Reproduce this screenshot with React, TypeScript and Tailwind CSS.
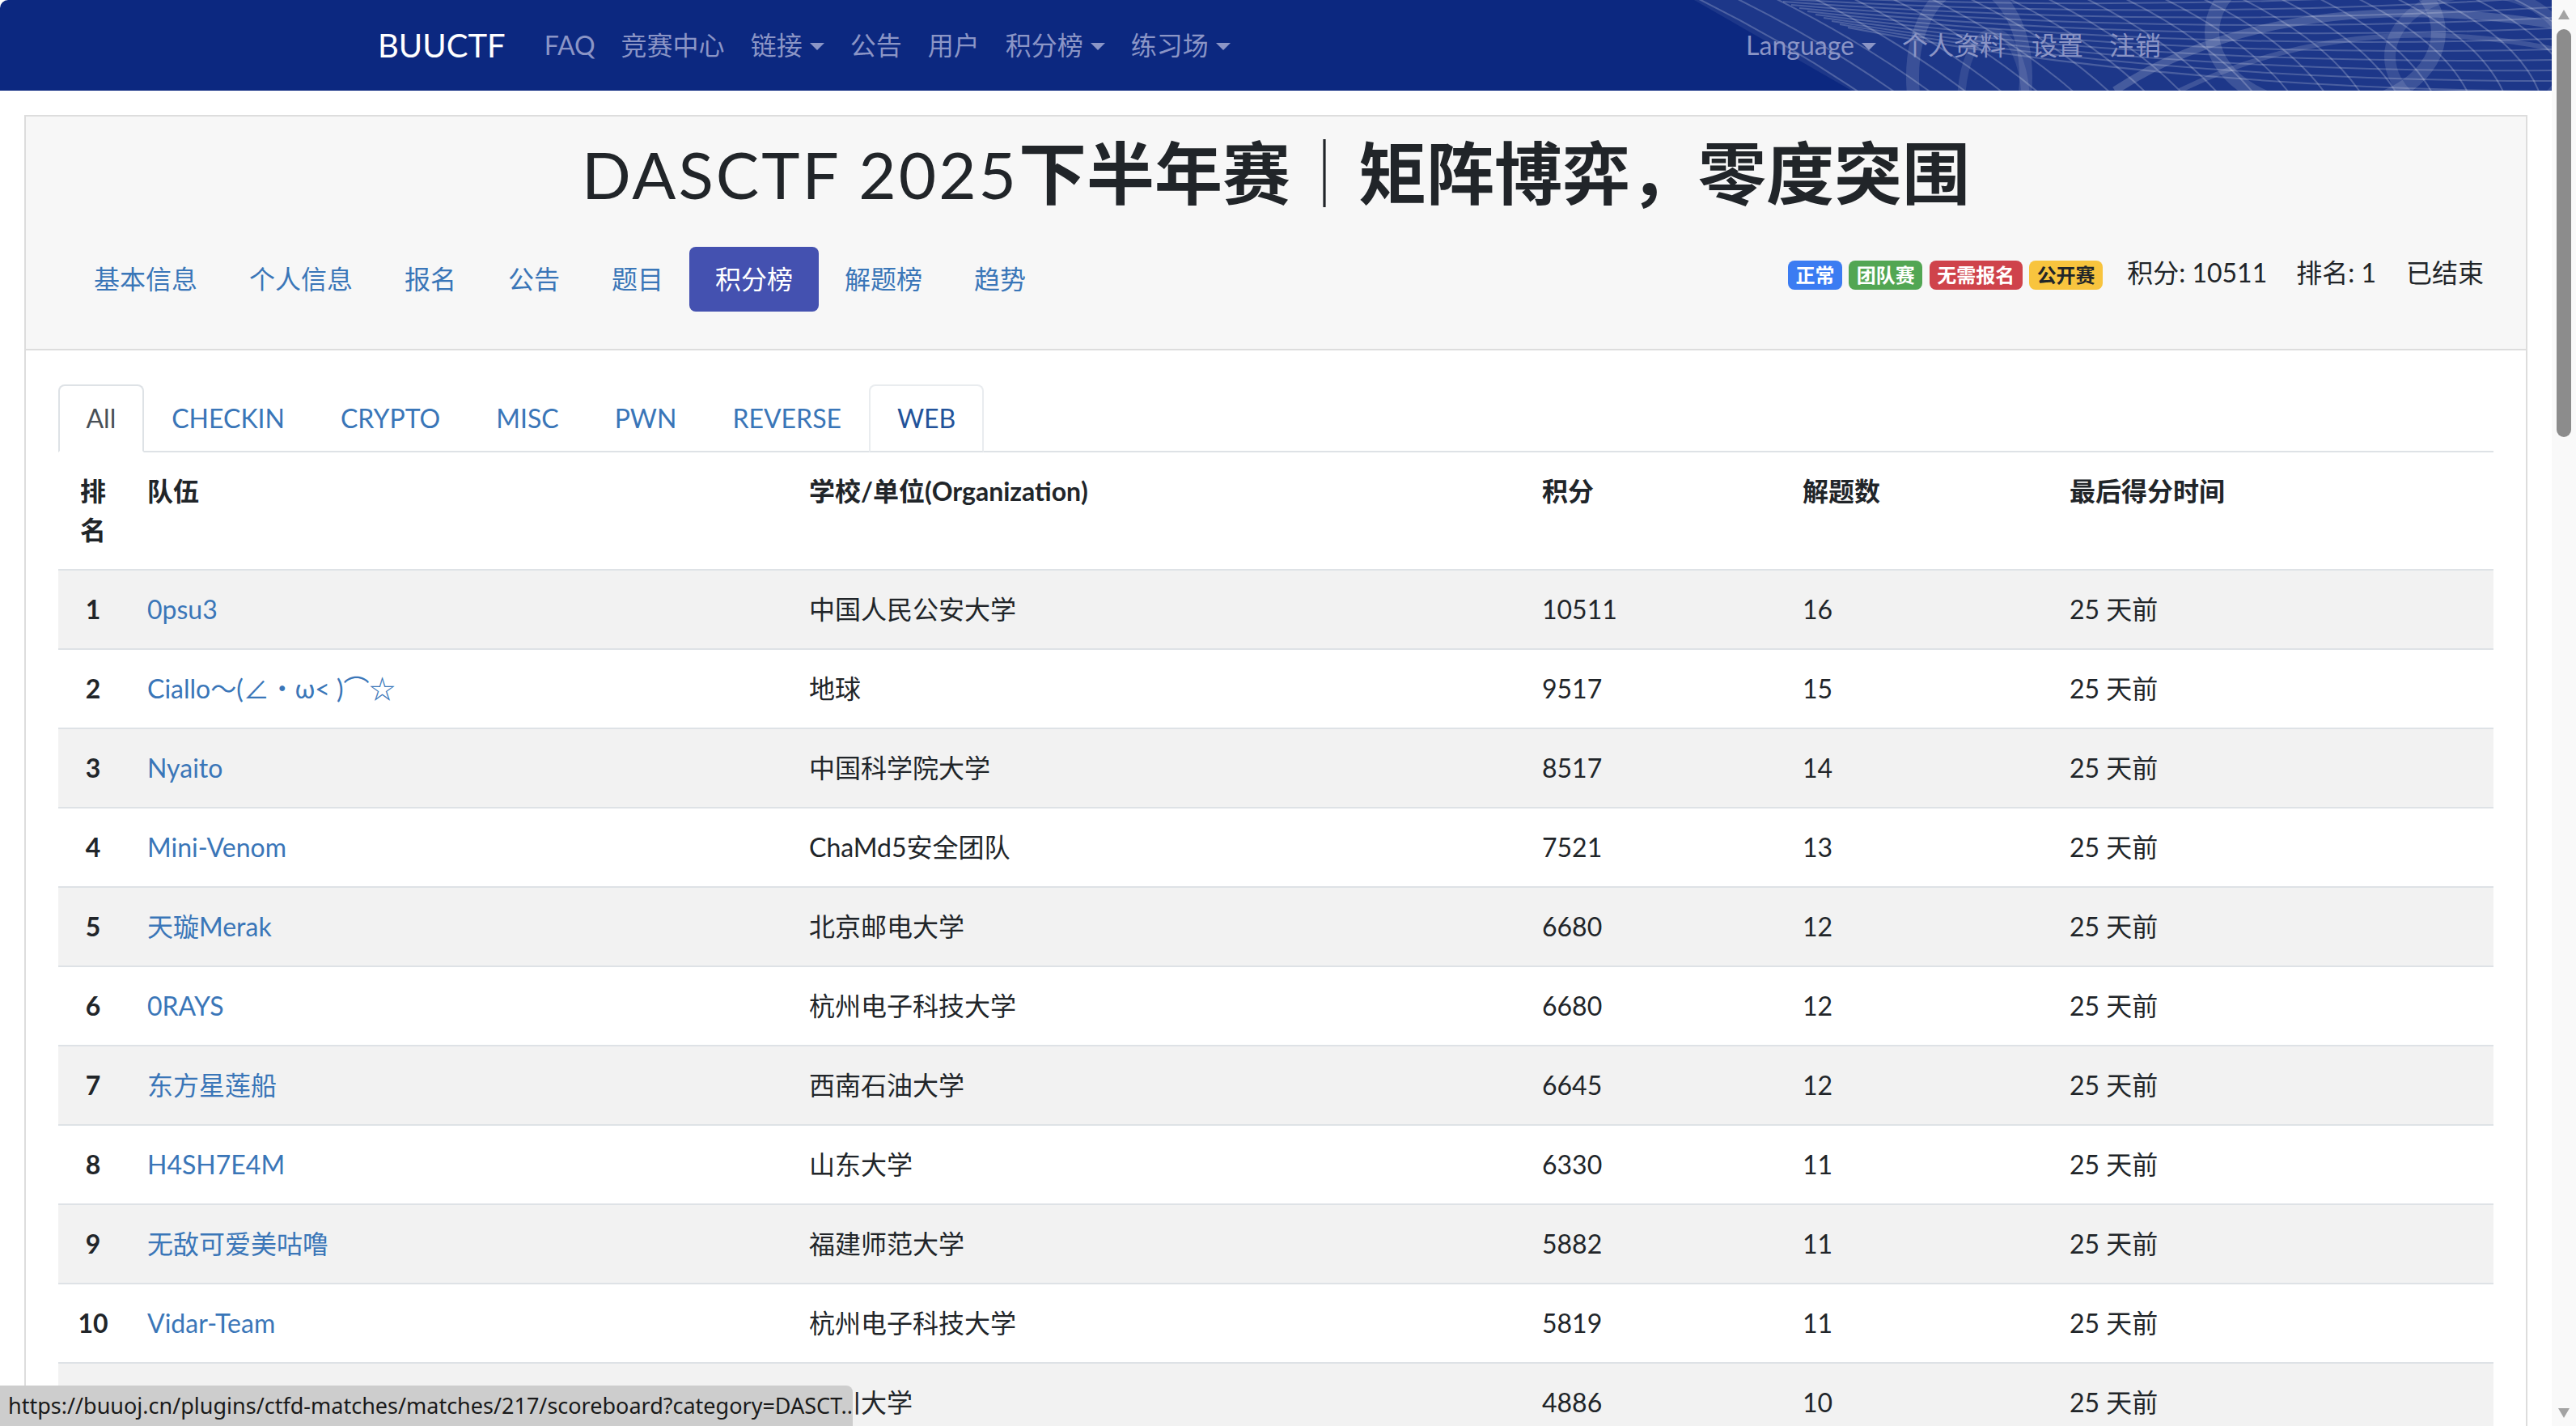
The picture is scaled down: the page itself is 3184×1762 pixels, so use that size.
import React from "react";

const LINK = "text-[#3a76b8]";

function Caret() {
  return (
    <span className="ml-[9px] inline-block h-0 w-0 border-x-[9px] border-t-[9px] border-x-transparent border-t-current align-[6px]" />
  );
}

function NavLink({ children, caret }: { children: React.ReactNode; caret?: boolean }) {
  return (
    <span className="whitespace-nowrap px-[16px] py-[16px] leading-[48px] text-[#8b95c6]">
      {children}
      {caret ? <Caret /> : null}
    </span>
  );
}

function NavBg() {
  const famA = Array.from({ length: 22 }, (_, i) => i);
  const famB = Array.from({ length: 12 }, (_, i) => i);
  return (
    <svg className="absolute right-0 top-0" width="1100" height="112" viewBox="0 0 1100 112" fill="none">
      <path d="M40 0 L1100 0 L1100 112 L235 112 Z" fill="#ffffff" fillOpacity="0.07" />
      {famA.map((i) => (
        <path
          key={"a" + i}
          d={`M${40 + i * 48} -4 Q ${150 + i * 48} 50 ${250 + i * 44} 118`}
          stroke="#ffffff"
          strokeOpacity="0.22"
          strokeWidth="2"
        />
      ))}
      {famB.map((j) => (
        <path
          key={"b" + j}
          d={`M${120 + j * 10} ${-10 + j * 4} Q 620 ${10 + j * 9} 1100 ${-30 + j * 13}`}
          stroke="#ffffff"
          strokeOpacity="0.2"
          strokeWidth="2"
        />
      ))}
      <ellipse cx="380" cy="95" rx="70" ry="115" stroke="#ffffff" strokeOpacity="0.13" strokeWidth="16" />
      <ellipse cx="410" cy="130" rx="40" ry="90" stroke="#ffffff" strokeOpacity="0.1" strokeWidth="10" />
      <ellipse cx="820" cy="40" rx="140" ry="95" stroke="#ffffff" strokeOpacity="0.14" strokeWidth="18" />
      <ellipse cx="1010" cy="70" rx="110" ry="80" stroke="#ffffff" strokeOpacity="0.12" strokeWidth="14" />
      <path d="M560 112 Q 760 -20 1100 30" stroke="#ffffff" strokeOpacity="0.18" strokeWidth="10" />
      <path d="M640 112 Q 850 10 1100 60" stroke="#ffffff" strokeOpacity="0.15" strokeWidth="6" />
    </svg>
  );
}

function Navbar() {
  return (
    <nav className="relative h-[112px] shrink-0 overflow-hidden rounded-tl-[10px] bg-[#0c2880]">
      <NavBg />
      <div className="relative mx-auto flex h-full max-w-[2280px] items-center px-[30px]">
        <span className="mr-[32px] whitespace-nowrap text-[40px] leading-[60px] text-white">BUUCTF</span>
        <NavLink>FAQ</NavLink>
        <NavLink>竞赛中心</NavLink>
        <NavLink caret>链接</NavLink>
        <NavLink>公告</NavLink>
        <NavLink>用户</NavLink>
        <NavLink caret>积分榜</NavLink>
        <NavLink caret>练习场</NavLink>
        <div className="ml-auto flex items-center">
          <NavLink caret>Language</NavLink>
          <NavLink>个人资料</NavLink>
          <NavLink>设置</NavLink>
          <NavLink>注销</NavLink>
        </div>
      </div>
    </nav>
  );
}

function Pill({ children, active }: { children: React.ReactNode; active?: boolean }) {
  return (
    <span
      className={
        "whitespace-nowrap rounded-[8px] px-[32px] py-[16px] leading-[48px] " +
        (active ? "bg-[#4451b0] text-white" : LINK)
      }
    >
      {children}
    </span>
  );
}

function Badge({ children, color }: { children: React.ReactNode; color: string }) {
  return (
    <span
      className={
        "inline-block rounded-[8px] px-[9.6px] py-[6px] align-baseline text-[24px] font-bold leading-none " + color
      }
    >
      {children}
    </span>
  );
}

function Tab({ children, active, hover }: { children: React.ReactNode; active?: boolean; hover?: boolean }) {
  let cls = "border-transparent " + LINK;
  if (active) cls = "border-[#dee2e6] border-b-white bg-white text-[#495057]";
  if (hover) cls = "border-[#e9ecef] border-b-[#dee2e6] text-[#23539a]";
  return (
    <span className={"-mb-[2px] whitespace-nowrap rounded-t-[8px] border-2 px-[32.5px] py-[16px] leading-[48px] " + cls}>
      {children}
    </span>
  );
}

const rows: [number, string, string, number, number][] = [
  [1, "0psu3", "中国人民公安大学", 10511, 16],
  [2, "Ciallo～(∠・ω< )⌒☆", "地球", 9517, 15],
  [3, "Nyaito", "中国科学院大学", 8517, 14],
  [4, "Mini-Venom", "ChaMd5安全团队", 7521, 13],
  [5, "天璇Merak", "北京邮电大学", 6680, 12],
  [6, "0RAYS", "杭州电子科技大学", 6680, 12],
  [7, "东方星莲船", "西南石油大学", 6645, 12],
  [8, "H4SH7E4M", "山东大学", 6330, 11],
  [9, "无敌可爱美咕噜", "福建师范大学", 5882, 11],
  [10, "Vidar-Team", "杭州电子科技大学", 5819, 11],
  [11, "L-team", "四川大学", 4886, 10],
  [12, "Xp0int", "暨南大学", 4700, 10],
];

function Card() {
  return (
    <div className="border-2 border-[#dddddd] bg-white">
      <div className="border-b-2 border-[#dddddd] bg-[#f7f7f7] px-[52px] pb-[46px] pt-[22px]">
        <h1 className="whitespace-nowrap text-center text-[80px] font-normal leading-[96px] text-[#212529]">
          <span className="tracking-[3px]">DASCTF 2025</span>
          <span className="text-[84px] font-bold">下半年赛</span>
          <span className="text-[84px] font-light">｜</span>
          <span className="text-[84px] font-bold">矩阵博弈，零度突围</span>
        </h1>
        <div className="mt-[42px] flex items-center">
          <Pill>基本信息</Pill>
          <Pill>个人信息</Pill>
          <Pill>报名</Pill>
          <Pill>公告</Pill>
          <Pill>题目</Pill>
          <Pill active>积分榜</Pill>
          <Pill>解题榜</Pill>
          <Pill>趋势</Pill>
          <div className="mb-[16px] ml-auto whitespace-nowrap leading-[48px] text-[#212529]">
            <Badge color="bg-[#3b7cf2] text-white">正常</Badge>{" "}
            <Badge color="bg-[#52a653] text-white">团队赛</Badge>{" "}
            <Badge color="bg-[#cf434b] text-white">无需报名</Badge>{" "}
            <Badge color="bg-[#f8c43e] text-[#212529]">公开赛</Badge>
            <span className="ml-[30px]">积分: 10511</span>
            <span className="ml-[36px]">排名: 1</span>
            <span className="ml-[37px]">已结束</span>
          </div>
        </div>
      </div>
      <div className="px-[40px] pt-[42px]">
        <div className="flex border-b-2 border-[#dee2e6]">
          <Tab active>All</Tab>
          <Tab>CHECKIN</Tab>
          <Tab>CRYPTO</Tab>
          <Tab>MISC</Tab>
          <Tab>PWN</Tab>
          <Tab>REVERSE</Tab>
          <Tab hover>WEB</Tab>
        </div>
        <table className="w-full table-fixed border-collapse text-left">
          <colgroup>
            <col className="w-[86px]" />
            <col className="w-[818px]" />
            <col className="w-[906px]" />
            <col className="w-[322px]" />
            <col className="w-[330px]" />
            <col />
          </colgroup>
          <thead>
            <tr className="align-top">
              <th className="p-[24px] text-center font-bold">排名</th>
              <th className="p-[24px] font-bold">队伍</th>
              <th className="p-[24px] font-bold">学校/单位(Organization)</th>
              <th className="p-[24px] font-bold">积分</th>
              <th className="p-[24px] font-bold">解题数</th>
              <th className="p-[24px] font-bold">最后得分时间</th>
            </tr>
          </thead>
          <tbody>
            {rows.map(([rank, team, org, score, solves]) => (
              <tr key={rank} className={"align-top " + (rank % 2 === 1 ? "bg-[#f2f2f2]" : "bg-white")}>
                <td className="border-t-2 border-[#dee2e6] p-[24px] text-center font-bold">{rank}</td>
                <td className={"whitespace-nowrap border-t-2 border-[#dee2e6] p-[24px] " + LINK}>{team}</td>
                <td className="whitespace-nowrap border-t-2 border-[#dee2e6] p-[24px]">{org}</td>
                <td className="border-t-2 border-[#dee2e6] p-[24px]">{score}</td>
                <td className="border-t-2 border-[#dee2e6] p-[24px]">{solves}</td>
                <td className="border-t-2 border-[#dee2e6] p-[24px]">25 天前</td>
              </tr>
            ))}
          </tbody>
        </table>
      </div>
    </div>
  );
}

function Scrollbar() {
  return (
    <div className="relative w-[30px] shrink-0 bg-[#f9f9f9]">
      <div className="mx-auto mt-[12px] h-0 w-0 border-x-[7px] border-b-[12px] border-x-transparent border-b-[#a3a3a3]" />
      <div className="mx-auto mt-[12px] h-[504px] w-[18px] rounded-full bg-[#8c8c8c]" />
      <div className="absolute bottom-[10px] left-[8px] h-0 w-0 border-x-[7px] border-t-[12px] border-x-transparent border-t-[#a3a3a3]" />
    </div>
  );
}

export default function App() {
  return (
    <div className="relative flex h-[1762px] w-full overflow-hidden bg-white font-['Lato','Noto_Sans_CJK_SC',sans-serif] text-[32px] leading-[1.5] text-[#212529]">
      <div className="flex min-w-0 flex-1 flex-col">
        <Navbar />
        <div className="px-[30px] pt-[30px]">
          <Card />
        </div>
      </div>
      <Scrollbar />
      <div className="absolute bottom-0 left-0 h-[50px] w-[1054px] overflow-hidden whitespace-nowrap rounded-tr-[8px] bg-[#cdcdcd] pl-[10px] font-['Noto_Sans',sans-serif] text-[27px] leading-[50px] text-[#1a1a1a]">
        https://buuoj.cn/plugins/ctfd-matches/matches/217/scoreboard?category=DASCT...
      </div>
    </div>
  );
}
